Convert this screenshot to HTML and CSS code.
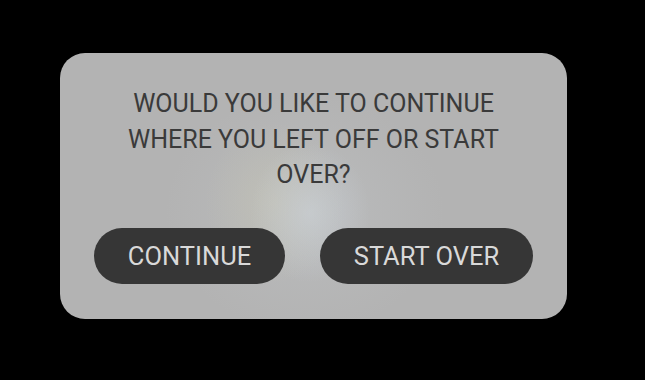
FILE: index.html
```html
<!DOCTYPE html>
<html>
<head>
<meta charset="utf-8">
<link rel="stylesheet" href="styles.css">
</head>
<body>
<div class="stage">
  <div class="dialog">
    <p class="message">WOULD YOU LIKE TO CONTINUE<br>WHERE YOU LEFT OFF OR START<br>OVER?</p>
    <div class="actions">
      <button class="btn btn-continue">CONTINUE</button>
      <button class="btn btn-restart">START OVER</button>
    </div>
  </div>
</div>
</body>
</html>
```
FILE: styles.css
```css
html, body {
  margin: 0;
  padding: 0;
  background: #000;
}
.stage {
  width: 645px;
  height: 380px;
  padding: 53px 0 0 60px;
  box-sizing: border-box;
}
.dialog {
  width: 507px;
  height: 266px;
  box-sizing: border-box;
  border-radius: 25px;
  background:
    radial-gradient(ellipse 60px 70px at 250px 160px, rgba(205, 212, 220, 0.55), rgba(200, 205, 212, 0) 100%),
    radial-gradient(ellipse 70px 80px at 215px 150px, rgba(205, 202, 175, 0.35), rgba(200, 200, 180, 0) 100%),
    radial-gradient(ellipse 140px 120px at 245px 160px, rgba(195, 198, 200, 0.45), rgba(179, 179, 179, 0) 100%),
    #b3b3b3;
  padding: 33px 34px 0 34px;
  font-family: Roboto, "Liberation Sans", sans-serif;
}
.message {
  margin: 0;
  text-align: center;
  color: #3a3a3a;
  font-size: 25px;
  line-height: 35.5px;
}
.actions {
  display: flex;
  justify-content: center;
  gap: 35px;
  margin-top: 35px;
}
.btn {
  height: 56px;
  border: none;
  border-radius: 28px;
  background: #363636;
  color: #d9d9d9;
  font-family: Roboto, "Liberation Sans", sans-serif;
  font-size: 25.5px;
  padding: 0;
}
.btn-continue { width: 191px; }
.btn-restart { width: 213px; }
```
